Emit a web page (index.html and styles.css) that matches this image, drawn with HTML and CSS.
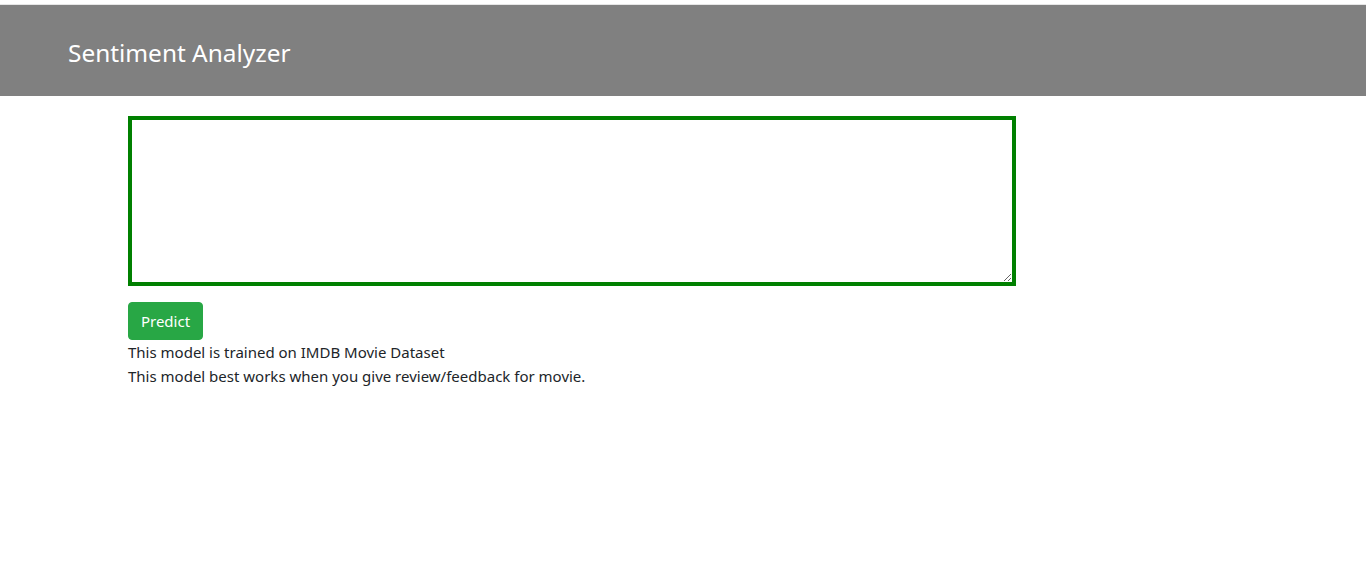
FILE: index.html
```html
<!DOCTYPE html>
<html>
<head>
<meta charset="utf-8">
<title>Sentiment Analyzer</title>
<link rel="stylesheet" href="styles.css">
</head>
<body>
<header class="topbar">
  <h1 class="brand">Sentiment Analyzer</h1>
</header>
<main class="content">
  <form class="form">
    <textarea class="review"></textarea>
    <button type="button" class="btn-predict">Predict</button>
  </form>
  <p class="note">This model is trained on IMDB Movie Dataset</p>
  <p class="note">This model best works when you give review/feedback for movie.</p>
</main>
</body>
</html>
```

FILE: styles.css
```css
html, body {
  margin: 0;
  padding: 0;
  background: #fff;
}
body {
  font-family: "Noto Sans", "Open Sans", sans-serif;
  font-size: 15px;
  color: #212529;
  padding-top: 4px;
}
.topbar {
  box-sizing: border-box;
  border-top: 1px solid #e6e6e6;
  background: #808080;
  height: 92px;
  display: flex;
  align-items: center;
  padding-left: 68px;
  padding-top: 4px;
}
.brand {
  margin: 0;
  font-weight: 400;
  font-size: 24.4px;
  color: #fff;
  line-height: 1.2;
}
.content {
  width: 888px;
  margin-left: 128px;
  padding-top: 20px;
}
.form {
  display: flex;
  flex-direction: column;
  align-items: flex-start;
}
.review {
  box-sizing: border-box;
  width: 888px;
  height: 170px;
  border: 4px solid #008000;
  margin: 0;
  padding: 6px;
  outline: none;
  font-family: inherit;
  font-size: 16px;
}
.btn-predict {
  margin-top: 16px;
  width: 75px;
  height: 38px;
  border: 1px solid #28a745;
  background: #28a745;
  color: #fff;
  border-radius: 4px;
  font-family: inherit;
  font-size: 15px;
  padding: 0;
}
.note {
  margin: 0;
  line-height: 24px;
}
```
